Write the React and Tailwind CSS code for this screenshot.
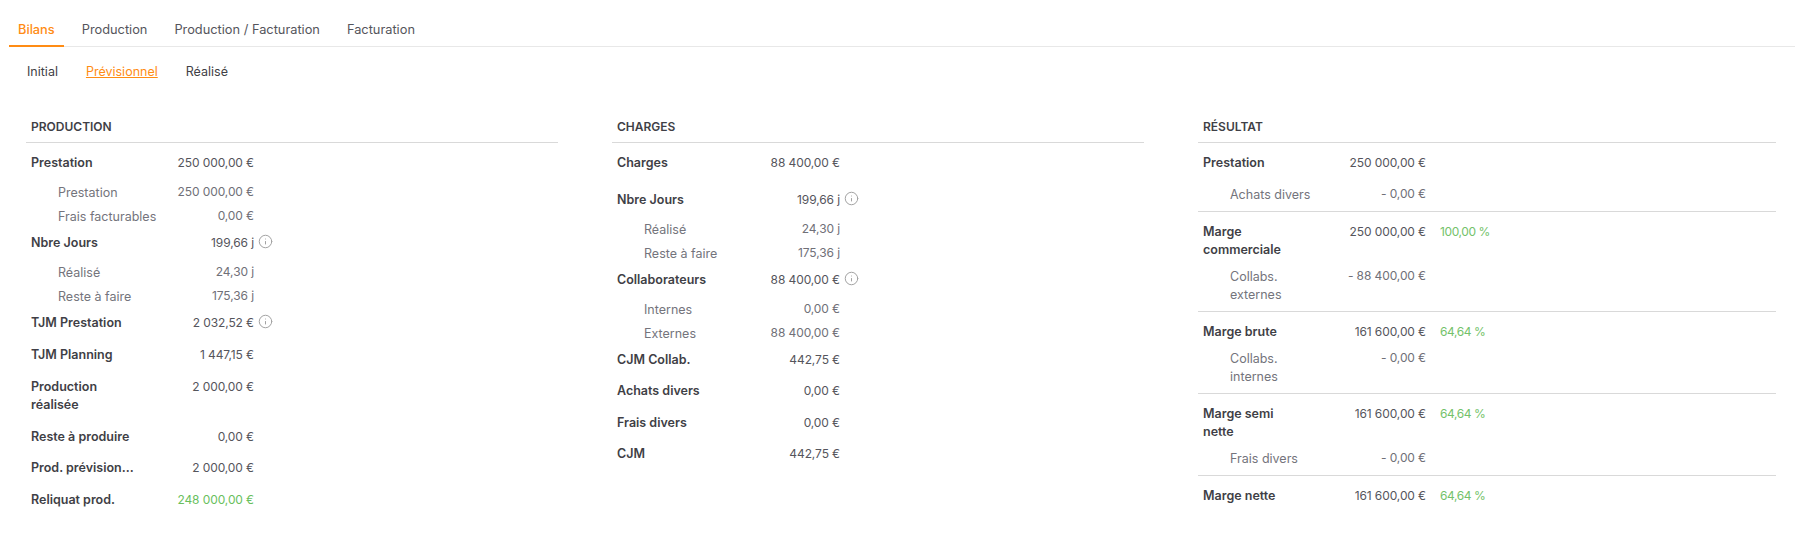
import React from "react";
import { Info } from "lucide-react";

const tabs = ["Bilans", "Production", "Production / Facturation", "Facturation"];

const production = [
  { label: "Prestation", value: "250 000,00 €" },
  { label: "Prestation", value: "250 000,00 €", sub: true },
  { label: "Frais facturables", value: "0,00 €", sub: true },
  { label: "Nbre Jours", value: "199,66 j", info: true },
  { label: "Réalisé", value: "24,30 j", sub: true },
  { label: "Reste à faire", value: "175,36 j", sub: true },
  { label: "TJM Prestation", value: "2 032,52 €", info: true },
  { label: "TJM Planning", value: "1 447,15 €" },
  { label: ["Production", "réalisée"], value: "2 000,00 €" },
  { label: "Reste à produire", value: "0,00 €", tight: true },
  { label: "Prod. prévision...", value: "2 000,00 €" },
  { label: "Reliquat prod.", value: "248 000,00 €", green: true },
];

const charges = [
  { label: "Charges", value: "88 400,00 €", extra: true },
  { label: "Nbre Jours", value: "199,66 j", info: true },
  { label: "Réalisé", value: "24,30 j", sub: true },
  { label: "Reste à faire", value: "175,36 j", sub: true },
  { label: "Collaborateurs", value: "88 400,00 €", info: true },
  { label: "Internes", value: "0,00 €", sub: true },
  { label: "Externes", value: "88 400,00 €", sub: true },
  { label: "CJM Collab.", value: "442,75 €", tight: true },
  { label: "Achats divers", value: "0,00 €" },
  { label: "Frais divers", value: "0,00 €", tight: true },
  { label: "CJM", value: "442,75 €" },
];

const resultat = [
  {
    main: { label: "Prestation", value: "250 000,00 €" },
    sub: { label: "Achats divers", value: "- 0,00 €" },
    first: true,
  },
  {
    main: { label: ["Marge", "commerciale"], value: "250 000,00 €", percent: "100,00 %" },
    sub: { label: ["Collabs.", "externes"], value: "- 88 400,00 €" },
  },
  {
    main: { label: "Marge brute", value: "161 600,00 €", percent: "64,64 %" },
    sub: { label: ["Collabs.", "internes"], value: "- 0,00 €" },
  },
  {
    main: { label: ["Marge semi", "nette"], value: "161 600,00 €", percent: "64,64 %" },
    sub: { label: "Frais divers", value: "- 0,00 €" },
  },
  {
    main: { label: "Marge nette", value: "161 600,00 €", percent: "64,64 %" },
  },
];

function Label({ label }) {
  if (Array.isArray(label)) {
    return (
      <>
        {label[0]}
        <br />
        {label[1]}
      </>
    );
  }
  return label;
}

function Row({ row, compact }) {
  let padding = "pt-[5px] pb-[9px]";
  if (row.sub) padding = "py-[3px]";
  else if (compact) padding = "pt-[5px] pb-[6px]";
  else if (row.tight) padding = "pt-[5px] pb-[8px]";

  return (
    <div className={`flex items-start pl-[5px] leading-[18px] ${padding} ${row.extra ? "mb-[5px]" : ""}`}>
      <div className="flex w-[223px] shrink-0">
        <div
          className={
            row.sub
              ? "w-[125px] shrink-0 pl-[27px] whitespace-nowrap text-[#74747c]"
              : "w-[125px] shrink-0 whitespace-nowrap font-semibold text-[#3f3f46]"
          }
        >
          <Label label={row.label} />
        </div>
        <div
          className={`flex-1 text-right text-[12px] tracking-[-0.1px] whitespace-nowrap ${
            row.green ? "text-[#6abf5e]" : row.sub ? "-mt-px text-[#707078]" : "text-[#55555c]"
          }`}
        >
          {row.value}
        </div>
      </div>
      {row.info && <Info size={15} strokeWidth={1.6} className="ml-[4px] text-[#a3a3a3]" />}
      {row.percent && (
        <div className="ml-[14px] text-[12px] tracking-[-0.4px] whitespace-nowrap text-[#74c26a]">{row.percent}</div>
      )}
    </div>
  );
}

function Section({ title, children }) {
  return (
    <section>
      <h2 className="flex h-[32px] items-center border-b border-[#d9d9d9] pt-[1px] pl-[5px] text-[12px] font-semibold text-[#3f3f46] uppercase">
        {title}
      </h2>
      <div className="pt-[6px]">{children}</div>
    </section>
  );
}

export default function App() {
  return (
    <div className="h-[559px] overflow-hidden bg-white text-[12.5px] [font-family:Inter,sans-serif]">
      <nav className="mt-[16px] mr-[10px] ml-[9px] flex h-[31px] gap-[9px] border-b border-[#e8e8e8] text-[12.8px]">
        {tabs.map((tab, i) => (
          <div
            key={tab}
            className={
              i === 0
                ? "-mb-px flex h-[31px] items-center border-b-2 border-[#ff8c14] px-[9px] pb-[2px] font-medium text-[#ff8c14]"
                : "flex h-[30px] items-center px-[9px] pb-[2px] text-[#55555c]"
            }
          >
            {tab}
          </div>
        ))}
      </nav>

      <div className="mt-[16px] ml-[27px] flex gap-[28px] leading-[18px]">
        <span className="text-[#3f3f46]">Initial</span>
        <span className="text-[#ff8c14] underline">Prévisionnel</span>
        <span className="text-[#3f3f46]">Réalisé</span>
      </div>

      <div className="mt-[30px] grid grid-cols-[532px_532px_578px] gap-x-[54px] pl-[26px]">
        <Section title="Production">
          {production.map((row) => (
            <Row key={row.label + row.value} row={row} />
          ))}
        </Section>
        <Section title="Charges">
          {charges.map((row) => (
            <Row key={row.label + row.value} row={row} />
          ))}
        </Section>
        <Section title="Résultat">
          {resultat.map((group, i) => (
            <div
              key={i}
              className={`${i < resultat.length - 1 ? "border-b border-[#d9d9d9] pb-[4px]" : ""} ${group.first ? "" : "pt-[6px]"}`}
            >
              <Row row={group.main} compact />
              {group.sub && (
                <div className={group.first ? "mt-[5px]" : ""}>
                  <Row row={{ ...group.sub, sub: true }} />
                </div>
              )}
            </div>
          ))}
        </Section>
      </div>
    </div>
  );
}
